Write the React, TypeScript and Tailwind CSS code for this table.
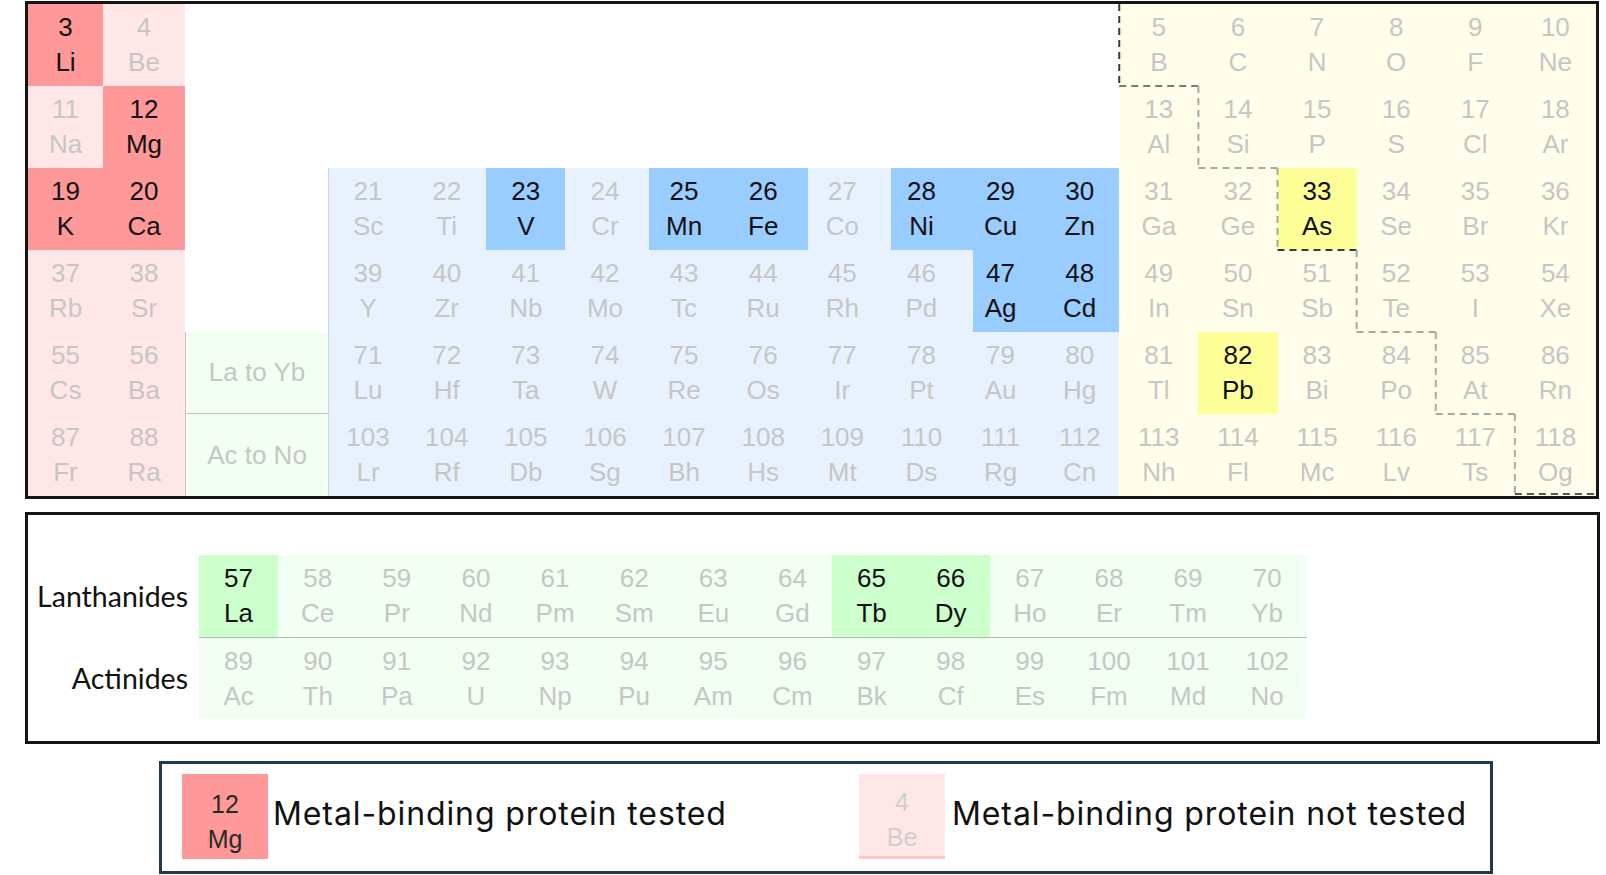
import React from "react";

type Block = "s" | "d" | "p" | "f";

const BG: Record<Block, { t: string; u: string }> = {
  s: { t: "bg-[#ff9999]", u: "bg-[#ffe7e7]" },
  d: { t: "bg-[#99ccff]", u: "bg-[#e8f2fe]" },
  p: { t: "bg-[#ffff99]", u: "bg-[#fffeea]" },
  f: { t: "bg-[#ccffcc]", u: "bg-[#f2fff2]" },
};

const TESTED = new Set([
  "Li", "Mg", "K", "Ca", "V", "Mn", "Fe", "Ni", "Cu", "Zn", "Ag", "Cd", "As", "Pb", "La", "Tb", "Dy",
]);

// small irregularities of the highlighted cells' edges in the original figure
const EDGE: Record<string, string> = {
  Mn: "bg-[linear-gradient(to_right,#e8f2fe_4px,#99ccff_4px)]",
  Co: "bg-[linear-gradient(to_right,#99ccff_5px,#e8f2fe_5px)]",
  Ni: "bg-[linear-gradient(to_right,#e8f2fe_9px,#99ccff_9px)]",
  Ag: "bg-[linear-gradient(to_right,#e8f2fe_12px,#99ccff_12px)]",
};

type E = [number, string];

function El({ e, block, extra = "" }: { e: E; block: Block; extra?: string }) {
  const tested = TESTED.has(e[1]);
  const bg = EDGE[e[1]] ?? (tested ? BG[block].t : BG[block].u);
  return (
    <div
      className={`${bg} ${
        tested ? "text-[#111111]" : "text-[#c6c6c6]"
      } flex flex-col items-center justify-center text-[26px] leading-[35px] ${extra}`}
    >
      <span>{e[0]}</span>
      <span>{e[1]}</span>
    </div>
  );
}

const rows: { s: E[]; d: E[] | null; p: E[] }[] = [
  {
    s: [[3, "Li"], [4, "Be"]],
    d: null,
    p: [[5, "B"], [6, "C"], [7, "N"], [8, "O"], [9, "F"], [10, "Ne"]],
  },
  {
    s: [[11, "Na"], [12, "Mg"]],
    d: null,
    p: [[13, "Al"], [14, "Si"], [15, "P"], [16, "S"], [17, "Cl"], [18, "Ar"]],
  },
  {
    s: [[19, "K"], [20, "Ca"]],
    d: [[21, "Sc"], [22, "Ti"], [23, "V"], [24, "Cr"], [25, "Mn"], [26, "Fe"], [27, "Co"], [28, "Ni"], [29, "Cu"], [30, "Zn"]],
    p: [[31, "Ga"], [32, "Ge"], [33, "As"], [34, "Se"], [35, "Br"], [36, "Kr"]],
  },
  {
    s: [[37, "Rb"], [38, "Sr"]],
    d: [[39, "Y"], [40, "Zr"], [41, "Nb"], [42, "Mo"], [43, "Tc"], [44, "Ru"], [45, "Rh"], [46, "Pd"], [47, "Ag"], [48, "Cd"]],
    p: [[49, "In"], [50, "Sn"], [51, "Sb"], [52, "Te"], [53, "I"], [54, "Xe"]],
  },
  {
    s: [[55, "Cs"], [56, "Ba"]],
    d: [[71, "Lu"], [72, "Hf"], [73, "Ta"], [74, "W"], [75, "Re"], [76, "Os"], [77, "Ir"], [78, "Pt"], [79, "Au"], [80, "Hg"]],
    p: [[81, "Tl"], [82, "Pb"], [83, "Bi"], [84, "Po"], [85, "At"], [86, "Rn"]],
  },
  {
    s: [[87, "Fr"], [88, "Ra"]],
    d: [[103, "Lr"], [104, "Rf"], [105, "Db"], [106, "Sg"], [107, "Bh"], [108, "Hs"], [109, "Mt"], [110, "Ds"], [111, "Rg"], [112, "Cn"]],
    p: [[113, "Nh"], [114, "Fl"], [115, "Mc"], [116, "Lv"], [117, "Ts"], [118, "Og"]],
  },
];

const lanth: E[] = [
  [57, "La"], [58, "Ce"], [59, "Pr"], [60, "Nd"], [61, "Pm"], [62, "Sm"], [63, "Eu"],
  [64, "Gd"], [65, "Tb"], [66, "Dy"], [67, "Ho"], [68, "Er"], [69, "Tm"], [70, "Yb"],
];
const actin: E[] = [
  [89, "Ac"], [90, "Th"], [91, "Pa"], [92, "U"], [93, "Np"], [94, "Pu"], [95, "Am"],
  [96, "Cm"], [97, "Bk"], [98, "Cf"], [99, "Es"], [100, "Fm"], [101, "Md"], [102, "No"],
];

// Metalloid staircase (drawing overlaid on the p-block)
const P0 = 1091.25;
const CW = 79.125;
const RH = 82;
const px = (k: number) => (k === 6 ? P0 + 5 * CW + 81 : P0 + k * CW);

function Staircase() {
  const dark = "#3a3a3a";
  const light = "#a8a8a8";
  const segs: { x1: number; y1: number; x2: number; y2: number; c: string }[] = [
    { x1: px(0), y1: 0, x2: px(0), y2: RH, c: dark },
    { x1: px(0), y1: RH, x2: px(1), y2: RH, c: "#7a7a7a" },
    { x1: px(1), y1: RH, x2: px(1), y2: 2 * RH, c: light },
    { x1: px(1), y1: 2 * RH, x2: px(2), y2: 2 * RH, c: light },
    { x1: px(2), y1: 2 * RH, x2: px(2), y2: 3 * RH, c: light },
    { x1: px(2), y1: 3 * RH, x2: px(3), y2: 3 * RH, c: dark },
    { x1: px(3), y1: 3 * RH, x2: px(3), y2: 4 * RH, c: light },
    { x1: px(3), y1: 4 * RH, x2: px(4), y2: 4 * RH, c: light },
    { x1: px(4), y1: 4 * RH, x2: px(4), y2: 5 * RH, c: light },
    { x1: px(4), y1: 5 * RH, x2: px(5), y2: 5 * RH, c: light },
    { x1: px(5), y1: 5 * RH, x2: px(5), y2: 6 * RH, c: light },
    { x1: px(5), y1: 6 * RH - 2, x2: px(6), y2: 6 * RH - 2, c: "#555555" },
  ];
  return (
    <svg className="absolute left-0 top-0 pointer-events-none" width={1568} height={492}>
      {segs.map((s, i) => (
        <line
          key={i}
          x1={s.x1}
          y1={s.y1}
          x2={s.x2}
          y2={s.y2}
          stroke={s.c}
          strokeWidth={2}
          strokeDasharray="7 5"
        />
      ))}
    </svg>
  );
}

function Swatch({ e, tested }: { e: E; tested: boolean }) {
  return (
    <div
      className={`w-[86px] h-[85px] flex flex-col items-center justify-center pt-[10px] text-[25px] leading-[35px] font-['Liberation_Sans',Arial,sans-serif] ${
        tested ? "bg-[#ff9999] text-[#2a2a2a]" : "bg-[#ffe7e7] text-[#cfcfcf] border-b-[3px] border-[#ffc9c9]"
      }`}
    >
      <span>{e[0]}</span>
      <span>{e[1]}</span>
    </div>
  );
}

export default function App() {
  return (
    <div className="w-[1606px] h-[875px] bg-white overflow-hidden font-['Liberation_Sans',Arial,sans-serif]">
      {/* Main table */}
      <div className="ml-[25px] mt-[1px] w-[1574px] border-[3px] border-[#151515]">
        <div className="relative grid grid-cols-[75px_82px_143px_repeat(15,79.125px)_81px] grid-rows-[repeat(6,82px)]">
          {rows.map((r, ri) => (
            <React.Fragment key={ri}>
              {r.s.map((e) => (
                <El key={e[1]} e={e} block="s" />
              ))}
              {ri < 2 && <div className="col-span-11 bg-white" />}
              {ri >= 2 && ri < 4 && <div className="bg-white" />}
              {ri === 4 && (
                <div className="bg-[#f3fff3] border-l border-b border-[#c4c4c4] flex items-center justify-center text-[26px] text-[#c6c6c6]">
                  La to Yb
                </div>
              )}
              {ri === 5 && (
                <div className="bg-[#f3fff3] border-l border-[#c4c4c4] flex items-center justify-center text-[26px] text-[#c6c6c6]">
                  Ac to No
                </div>
              )}
              {r.d &&
                r.d.map((e, i) => (
                  <El key={e[1]} e={e} block="d" extra={i === 0 ? "border-l border-[#d2d2d2]" : ""} />
                ))}
              {r.p.map((e) => (
                <El key={e[1]} e={e} block="p" />
              ))}
            </React.Fragment>
          ))}
          <Staircase />
        </div>
      </div>

      {/* Lanthanides / Actinides */}
      <div className="ml-[25px] mt-[13px] w-[1575px] h-[232px] border-[3px] border-[#151515] pt-[40px]">
        <div className="grid grid-cols-[171px_repeat(14,79.125px)] grid-rows-[82px_82px]">
          <div className="flex items-center justify-end pr-[11px] font-['Lato',sans-serif] text-[28.5px] text-[#111111]">
            Lanthanides
          </div>
          {lanth.map((e) => (
            <El key={e[1]} e={e} block="f" />
          ))}
          <div className="flex items-center justify-end pr-[11px] font-['Lato',sans-serif] text-[28.5px] text-[#111111]">
            Actinides
          </div>
          {actin.map((e) => (
            <El key={e[1]} e={e} block="f" extra="border-t border-[#b8b8b8]" />
          ))}
        </div>
      </div>

      {/* Legend */}
      <div className="ml-[159px] mt-[17px] w-[1334px] h-[113px] border-[3px] border-[#1e3a4c] flex items-start pl-[20px] pt-[10px]">
        <div className="w-[677px] flex items-start">
          <Swatch e={[12, "Mg"]} tested />
          <div className="h-[85px] flex items-center pb-[6px] ml-[5px] font-['Inter',sans-serif] text-[32px] tracking-[0.9px] text-[#111111]">
            Metal-binding protein tested
          </div>
        </div>
        <div className="flex items-start">
          <Swatch e={[4, "Be"]} tested={false} />
          <div className="h-[85px] flex items-center pb-[6px] ml-[7px] font-['Inter',sans-serif] text-[32px] tracking-[0.9px] text-[#111111]">
            Metal-binding protein not tested
          </div>
        </div>
      </div>
    </div>
  );
}
